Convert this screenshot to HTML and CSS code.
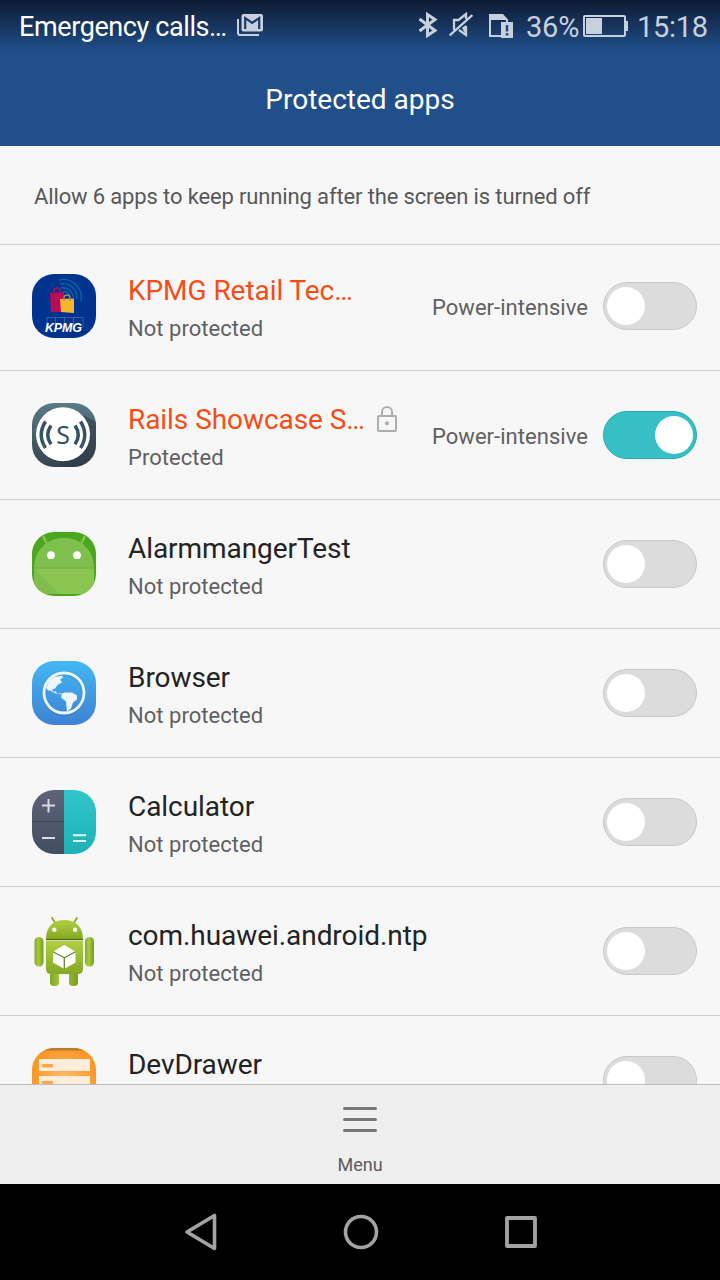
FILE: index.html
```html
<!DOCTYPE html>
<html lang="en">
<head>
<meta charset="utf-8">
<title>Protected apps</title>
<link rel="stylesheet" href="styles.css">
</head>
<body>
<div class="screen">
  <header class="header">
    <div class="status">
      <span class="carrier">Emergency calls…</span>
      <svg class="mail" width="26" height="22" viewBox="0 0 26 22"><path d="M1 5v14q0 2 2 2h19" fill="none" stroke="#c7d0dd" stroke-width="2"/><rect x="4.500" width="21.500" height="17.500" rx="2" fill="#c7d0dd"/><path d="M8.200 15V4l7 4.800 7-4.800v11" fill="none" stroke="#1d3b68" stroke-width="2.200"/></svg>
      <svg class="bluetooth" width="20" height="26" viewBox="0 0 20 26"><path d="M1.500 7 17 18.500 9.500 23.500V2.500L17 7.500 1.500 19" fill="none" stroke="#c7d0dd" stroke-width="3"/></svg>
      <svg class="muted" width="24" height="26" viewBox="0 0 24 26"><path d="M.7 23.500 23.300 3M5 18V8h4.500L17 2v5M10 18l7 5v-9" fill="none" stroke="#c7d0dd" stroke-width="2.300"/><path d="m13 16 4-3v10z" fill="#c7d0dd"/></svg>
      <svg class="sim" width="24" height="24" viewBox="0 0 24 24"><path d="M1 1h12l5 5v3M1 1v21h12" fill="none" stroke="#c7d0dd" stroke-width="2"/><path d="M0 0h14l5 6H0zM12 8h12v16H12z" fill="#c7d0dd"/><path d="M18 11v6.500M18 19v2.500" stroke="#204b84" stroke-width="2.500"/></svg>
      <span class="percent">36%</span>
      <svg class="battery" width="45" height="22" viewBox="0 0 45 22"><rect x="1" y="1" width="41" height="20" rx="1" fill="none" stroke="#c7d0dd" stroke-width="2"/><path d="M3 3h16v16H3zM42 6h3v10h-3z" fill="#c7d0dd"/></svg>
      <span class="clock">15:18</span>
    </div>
    <h1 class="heading">Protected apps</h1>
  </header>
  <p class="notice">Allow 6 apps to keep running after the screen is turned off</p>
  <main class="list">
    <section class="row row-first">
      <svg class="icon" viewBox="0 0 64 64"><rect width="64" height="64" rx="22" fill="#00338d"/><g fill="none" stroke="#0868ad" stroke-width="1.300"><path d="M27 6a18 18 0 0 1 22 21M28 10a14 14 0 0 1 17 15M29 14a10 10 0 0 1 12 9M30 18a6 6 0 0 1 8 4"/></g><path d="m18 19 14-1v20H19z" fill="#b70d54"/><path d="M22 21v-4q0-3 3-3t3 3v4" fill="none" stroke="#b70d54" stroke-width="1.500"/><path d="m28 25 14-.5V39l-13-1z" fill="#f5b62d"/><path d="M32 27v-3q0-3 3-3t3 3v3" fill="none" stroke="#aa8b60" stroke-width="1.300"/><path d="M15 54V43.500h36V54M23.500 43.500V54M32.500 43.500V54M41.500 43.500V54" fill="none" stroke="#426ab0" stroke-width=".8"/><text x="13" y="58.300" class="logo-kpmg" textLength="37">KPMG</text></svg>
      <div class="text"><div class="title hot"><span>KPMG Retail Tec…</span></div><div class="state">Not protected</div></div>
      <span class="power">Power-intensive</span><span class="switch"><i></i></span>
    </section>
    <section class="row">
      <svg class="icon" viewBox="0 0 64 64"><defs><linearGradient id="slate" x2="0" y2="1"><stop stop-color="#577a85"/><stop offset="1" stop-color="#374450"/></linearGradient><clipPath id="tile"><rect width="64" height="64" rx="22"/></clipPath></defs><rect width="64" height="64" rx="22" fill="url(#slate)"/><path d="m49 11 15 8v45H28V58z" fill="#26333e" opacity=".45" clip-path="url(#tile)"/><circle cx="31" cy="32" r="27" fill="#26333e" opacity=".5"/><circle cx="31" cy="31.300" r="27" fill="#fff"/><g fill="none" stroke="#335463" stroke-width="3.500"><path d="M19 22.500Q12.500 32 19 41.300M13.500 18.500Q5 32 13.500 45M43 22.500Q49.500 32 43 41.300M48.500 18.500Q57 32 48.500 45"/></g><text x="31" y="40.500" text-anchor="middle" class="logo-s">S</text></svg>
      <div class="text"><div class="title hot"><span>Rails Showcase S…</span><svg class="lock" width="20" height="26" viewBox="0 0 20 26"><rect x="1" y="10" width="18" height="15" rx="1" fill="none" stroke="#adadad" stroke-width="2"/><path d="M5 10V6a5 5 0 0 1 10 0v4" fill="none" stroke="#adadad" stroke-width="2"/><circle cx="10" cy="17.200" r="2" fill="#adadad"/></svg></div><div class="state">Protected</div></div>
      <span class="power">Power-intensive</span><span class="switch on"><i></i></span>
    </section>
    <section class="row">
      <svg class="icon" viewBox="0 0 64 64"><rect width="64" height="64" rx="22" fill="#4aa81f"/><g clip-path="url(#tile)"><path d="m11 4 4 8M53 4l-4 8" stroke="#8bc34a" stroke-width="2.500"/><path d="M2 36C3 17 16 6 32 6s29 11 30 30v26H2z" fill="#8bc552"/><path d="M2 36C3 17 16 6 32 6s29 11 30 30z" fill="#7fbf4d"/><path d="m2 36 26 26H2z" fill="#79b748" opacity=".55"/><path d="M2 36h60" stroke="#70ac3f"/></g><circle cx="19" cy="23.200" r="3.900" fill="#fff"/><circle cx="45" cy="23.200" r="3.900" fill="#fff"/></svg>
      <div class="text"><div class="title"><span>AlarmmangerTest</span></div><div class="state">Not protected</div></div>
      <span class="switch"><i></i></span>
    </section>
    <section class="row">
      <svg class="icon" viewBox="0 0 64 64"><defs><linearGradient id="sky" x2="0" y2="1"><stop stop-color="#43b7f3"/><stop offset="1" stop-color="#3e82d3"/></linearGradient></defs><rect width="64" height="64" rx="22" fill="url(#sky)"/><circle cx="32" cy="33" r="20" fill="none" stroke="#286ba9" stroke-width="3" opacity=".5"/><circle cx="32" cy="32" r="20" fill="none" stroke="#eef7fd" stroke-width="2.800"/><path d="m14 27 3-7 5-4 8-1.500 1 2-3 2 2 3-4 2-3 4-3 1 1 2h3l1 2 5 0 3-1 7 0 5 3v4l-4 3-2 6-4 3-1-10-5-4 1-3-6-1-6-3-2 0z" fill="#eef6fd"/></svg>
      <div class="text"><div class="title"><span>Browser</span></div><div class="state">Not protected</div></div>
      <span class="switch"><i></i></span>
    </section>
    <section class="row">
      <svg class="icon" viewBox="0 0 64 64"><defs><linearGradient id="ink" x2="0" y2="1"><stop stop-color="#5f6379"/><stop offset="1" stop-color="#424d60"/></linearGradient><linearGradient id="teal" x2="0" y2="1"><stop stop-color="#31c5c9"/><stop offset="1" stop-color="#1eb1b6"/></linearGradient></defs><g clip-path="url(#tile)"><path d="M0 0h32v64H0z" fill="url(#ink)"/><path d="M32 0h32v64H32z" fill="url(#teal)"/><path d="M0 31.500h32" stroke="#3d4557"/></g><path d="M10 15.500h13M16.500 9v13.500M10 48h13" stroke="#d8dae4" stroke-width="2"/><path d="M41 45.200h13M41 51h13" stroke="#e9ffff" stroke-width="2"/></svg>
      <div class="text"><div class="title"><span>Calculator</span></div><div class="state">Not protected</div></div>
      <span class="switch"><i></i></span>
    </section>
    <section class="row">
      <svg class="icon" viewBox="0 0 64 64"><defs><linearGradient id="lime" x2="0" y2="1"><stop stop-color="#b0cf3f"/><stop offset="1" stop-color="#84a925"/></linearGradient><linearGradient id="limb"><stop stop-color="#82a728"/><stop offset=".4" stop-color="#a9cb3e"/><stop offset="1" stop-color="#789d20"/></linearGradient></defs><path d="m20-1 4 6M45-1l-4 6" stroke="#8baa37" stroke-width="2" stroke-linecap="round"/><path d="M14 20C14 8 21 1 32.300 1S51 8 51 20z" fill="url(#lime)"/><path d="M14 20.500h37" stroke="#537215" stroke-width="1.500"/><path d="M14 22h37v28q0 5-5 5H19q-5 0-5-5z" fill="url(#lime)"/><rect x="2.500" y="18" width="9" height="29.500" rx="4.500" fill="url(#limb)"/><rect x="53" y="18" width="9" height="29.500" rx="4.500" fill="url(#limb)"/><path d="M18 55h9v9q0 3-4.500 3T18 64zM37 55h9v9q0 3-4.500 3T37 64z" fill="url(#limb)"/><circle cx="22.300" cy="10.700" r="2.200" fill="#fff"/><circle cx="43" cy="10.700" r="2.200" fill="#fff"/><path d="m32.300 26 11.200 6.500v11L32.300 50 21 43.500v-11z" fill="#fff"/><path d="m21 32.700 11.300 6 11.200-6M32.300 38.700V50" fill="none" stroke="#69862b" stroke-width="1.300"/></svg>
      <div class="text"><div class="title"><span>com.huawei.android.ntp</span></div><div class="state">Not protected</div></div>
      <span class="switch"><i></i></span>
    </section>
    <section class="row">
      <svg class="icon" viewBox="0 0 64 64"><defs><radialGradient id="amber"><stop stop-color="#ffbd6c"/><stop offset="1" stop-color="#fb9828"/></radialGradient></defs><g clip-path="url(#tile)"><path d="M0 0h64v64H0z" fill="url(#amber)"/><path d="M0 0h64v2.500H0z" fill="#b87b35"/></g><path d="M7 11h51v12H7zM7 28h51v12H7z" fill="#ffeddc"/><path d="M10 16h11v3.500H10zM10 33h11v3.500H10z" fill="#fda645"/></svg>
      <div class="text"><div class="title"><span>DevDrawer</span></div></div>
      <span class="switch"><i></i></span>
    </section>
  </main>
  <footer class="menu">
    <svg width="36" height="28" viewBox="0 0 36 28"><path d="M2.500 3.500h31M2.500 14.500h31M2.500 25.500h31" stroke="#777" stroke-width="3" stroke-linecap="round"/></svg>
    <span>Menu</span>
  </footer>
  <nav class="nav">
    <svg width="36" height="40" viewBox="0 0 36 40"><path d="M31.500 3.500v33L4 20z" fill="none" stroke="#a3a3a3" stroke-width="3.600" stroke-linejoin="round"/></svg>
    <svg width="36" height="36" viewBox="0 0 36 36"><circle cx="18" cy="18" r="15.500" fill="none" stroke="#a3a3a3" stroke-width="3.600"/></svg>
    <svg width="36" height="36" viewBox="0 0 36 36"><rect x="4" y="4" width="28" height="28" fill="none" stroke="#a3a3a3" stroke-width="3.800" stroke-linejoin="round"/></svg>
  </nav>
</div>
</body>
</html>
```
FILE: styles.css
```css
* { box-sizing: border-box; }
body { margin: 0; font-family: Roboto, "Liberation Sans", sans-serif; background: #f7f7f7; }
svg { display: block; flex: none; }
.screen { width: 720px; height: 1280px; display: flex; flex-direction: column; overflow: hidden; }
.header { height: 146px; flex: none; background: linear-gradient(#0d1c34 0, #11233f 8px, #204f8c 52px); color: #fff; }
.status { display: flex; height: 53px; padding: 0 12px 0 19px; align-items: center; white-space: nowrap; }
.carrier { width: 218px; flex: none; font-size: 27px; letter-spacing: -.4px; }
.mail { margin-top: -3px; }
.bluetooth { margin-left: 155px; margin-top: -3px; }
.muted { margin-left: 11px; margin-top: -3px; }
.sim { margin-left: 16px; margin-top: -1px; }
.percent { width: 57px; flex: none; margin-left: 13px; font-size: 29px; letter-spacing: -.2px; color: #c7d0dd; }
.battery { margin-top: -2px; }
.clock { margin-left: 9px; font-size: 29px; letter-spacing: -.3px; color: #c7d0dd; }
.heading { margin: 0; height: 93px; line-height: 94px; text-align: center; font-size: 28px; font-weight: 400; }
.notice { flex: none; margin: 0; height: 99px; padding-left: 34px; line-height: 101px; border-bottom: 1px solid #d0d0d0; font-size: 22px; letter-spacing: -.14px; color: #585858; white-space: nowrap; }
.list { height: 839px; flex: none; overflow: hidden; }
.row { height: 129px; padding: 0 23px 0 32px; border-bottom: 1px solid #d0d0d0; display: flex; align-items: center; }
.row-first { height: 126px; padding-bottom: 3px; }
.icon { width: 64px; height: 64px; margin-right: 32px; overflow: visible; }
.logo-kpmg { font: italic 700 12.5px "Liberation Sans", Arial, sans-serif; fill: #fff; }
.logo-s { font: 25px "Noto Sans", sans-serif; fill: #335463; }
.text { flex: 1; height: 84px; padding-top: 8px; white-space: nowrap; }
.title { display: flex; align-items: center; height: 38px; font-size: 28px; line-height: 38px; letter-spacing: -.06px; color: #232323; }
.hot { color: #f74c13; }
.lock { margin-left: 12px; margin-top: -3px; }
.state { height: 38px; font-size: 22px; line-height: 38px; letter-spacing: .04px; color: #606060; }
.power { margin-right: 15px; padding-top: 2px; font-size: 22px; letter-spacing: .04px; color: #606060; }
.switch { width: 94px; height: 48px; padding: 4px 3px; border: 1px solid #c8c8c8; border-radius: 24px; background: #dcdcdc; display: flex; }
.switch i { width: 38px; height: 38px; border-radius: 50%; background: #fff; }
.on { justify-content: flex-end; background: #36c0c6; border-color: #23abb0; }
.menu { height: 100px; flex: none; border-top: 1px solid #bdbdbd; background: #efefef; display: flex; flex-direction: column; align-items: center; padding-top: 20px; font-size: 18px; color: #5b5b5b; }
.menu span { line-height: 24px; margin-top: 20px; }
.nav { height: 96px; flex: none; padding-left: 2px; background: #000; display: flex; align-items: center; justify-content: center; gap: 124px; }
```
